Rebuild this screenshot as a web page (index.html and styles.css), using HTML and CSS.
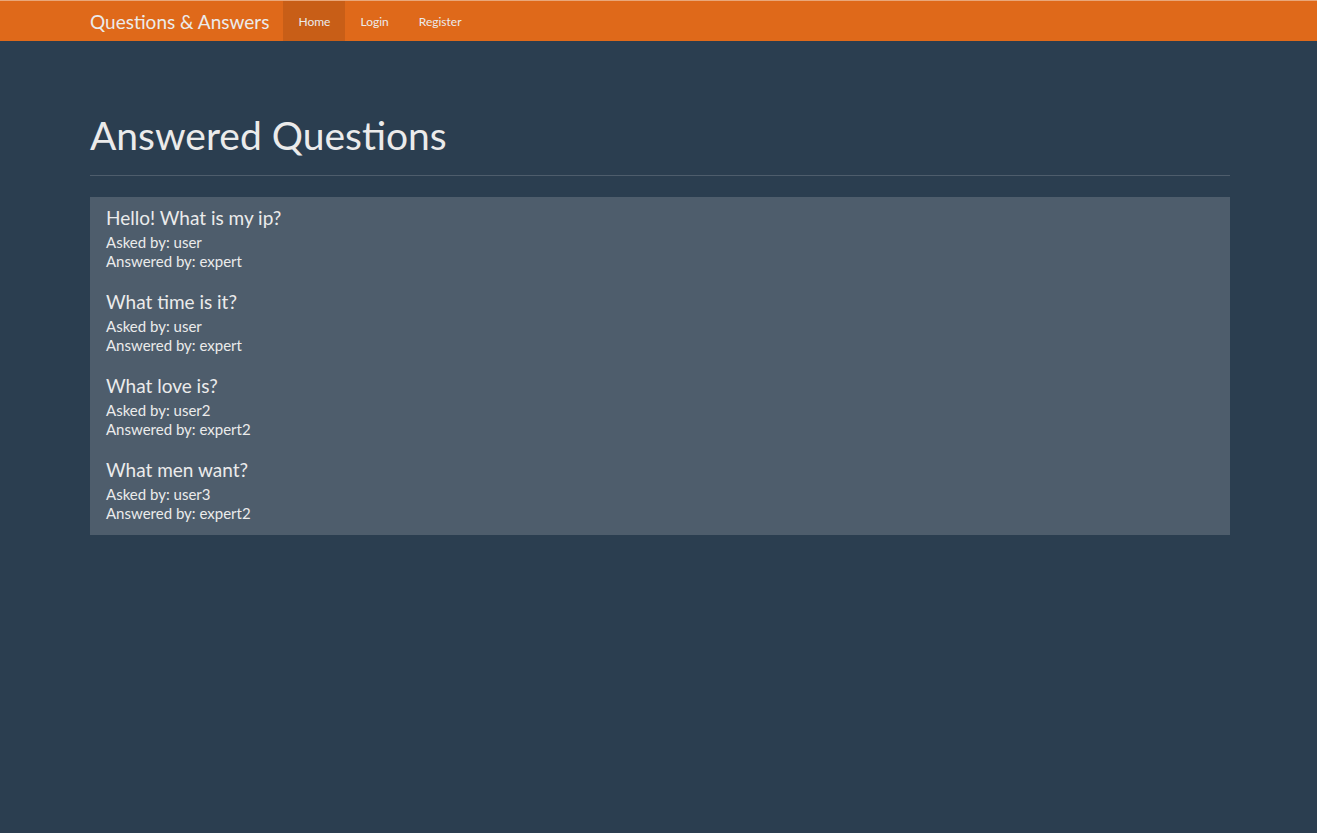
FILE: index.html
```html
<!DOCTYPE html>
<html>
<head>
<meta charset="utf-8">
<title>Questions &amp; Answers</title>
<link rel="stylesheet" href="styles.css">
</head>
<body>
<nav class="navbar">
  <div class="container nav-inner">
    <a class="brand" href="#">Questions &amp; Answers</a>
    <ul class="nav">
      <li><a class="nav-link active" href="#">Home</a></li>
      <li><a class="nav-link" href="#">Login</a></li>
      <li><a class="nav-link" href="#">Register</a></li>
    </ul>
  </div>
</nav>
<main class="container">
  <div class="page-header">
    <h1 class="title">Answered Questions</h1>
  </div>
  <div class="questions">
    <div class="question">
      <h4 class="q-title">Hello! What is my ip?</h4>
      <div class="q-line">Asked by: user</div>
      <div class="q-line">Answered by: expert</div>
    </div>
    <div class="question">
      <h4 class="q-title">What time is it?</h4>
      <div class="q-line">Asked by: user</div>
      <div class="q-line">Answered by: expert</div>
    </div>
    <div class="question">
      <h4 class="q-title">What love is?</h4>
      <div class="q-line">Asked by: user2</div>
      <div class="q-line">Answered by: expert2</div>
    </div>
    <div class="question">
      <h4 class="q-title">What men want?</h4>
      <div class="q-line">Asked by: user3</div>
      <div class="q-line">Answered by: expert2</div>
    </div>
  </div>
</main>
</body>
</html>
```
FILE: styles.css
```css
html, body {
  margin: 0;
  padding: 0;
}
body {
  background: #2b3e50;
  color: #ebebeb;
  font-family: Lato, "Open Sans", sans-serif;
  font-size: 15px;
  min-height: 833px;
  border-top: 1px solid #e9a77a;
  box-sizing: border-box;
}
.container {
  width: 1140px;
  margin-left: 90px;
}
.navbar {
  background: #df691a;
  height: 40px;
}
.nav-inner {
  display: flex;
  align-items: stretch;
  height: 40px;
}
.brand {
  color: #ebebeb;
  text-decoration: none;
  font-size: 19px;
  line-height: 38px;
  padding: 2px 14px 0 0;
}
.nav {
  display: flex;
  list-style: none;
  margin: 0;
  padding: 0;
}
.nav-link {
  display: block;
  color: #ebebeb;
  text-decoration: none;
  font-size: 12px;
  line-height: 38px;
  padding: 2px 15px 0;
}
.nav-link.active {
  background: #c85e17;
}
.page-header {
  margin-top: 68px;
  padding-bottom: 13px;
  border-bottom: 1px solid #4e5d6c;
  margin-bottom: 21px;
}
.title {
  margin: 0;
  font-size: 39px;
  font-weight: 400;
  line-height: 53px;
}
.questions {
  background: #4e5d6c;
  padding: 10px 16px 12px;
  display: flex;
  flex-direction: column;
  gap: 20px;
}
.q-title {
  margin: 0 0 4px;
  font-size: 19px;
  font-weight: 400;
  line-height: 22px;
}
.q-line {
  font-size: 15px;
  line-height: 19px;
}
```
